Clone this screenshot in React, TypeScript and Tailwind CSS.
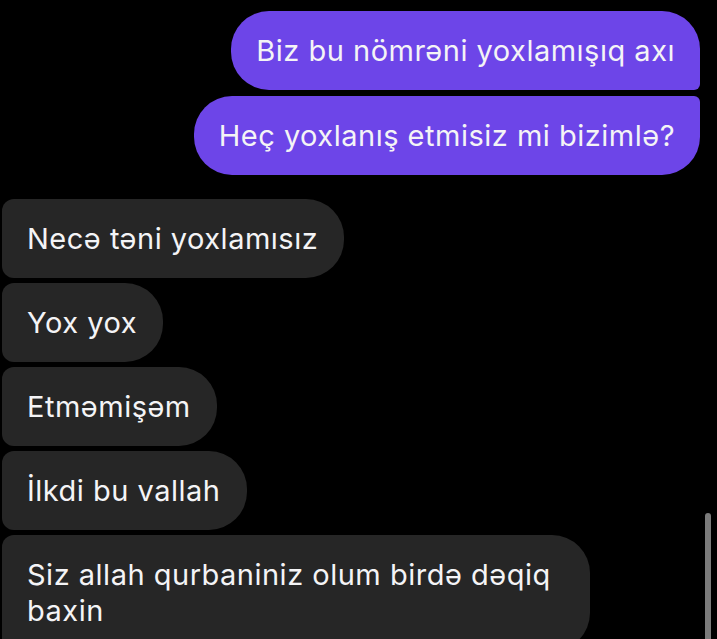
const sent = [
  { text: "Biz bu nömrəni yoxlamışıq axı", shape: "rounded-[38px] rounded-br-[6px]" },
  { text: "Heç yoxlanış etmisiz mi bizimlə?", shape: "rounded-[38px] rounded-tr-[6px]" },
];

const received = [
  "Necə təni yoxlamısız",
  "Yox yox",
  "Etməmişəm",
  "İlkdi bu vallah",
];

export default function App() {
  return (
    <div
      className="relative h-[639px] w-[717px] overflow-hidden bg-black text-[29px] leading-[36px] tracking-[0.5px] text-[#f4f4f6]"
      style={{ fontFamily: "Inter, 'Noto Sans', sans-serif" }}
    >
      <div className="flex flex-col items-end gap-[6px] pt-[11px] pr-[17px]">
        {sent.map((m) => (
          <div key={m.text} className={`flex h-[79px] items-center bg-[#6d45e8] pl-[25px] pr-[25px] ${m.shape}`}>
            {m.text}
          </div>
        ))}
      </div>

      <div className="mt-[24px] flex flex-col items-start gap-[5px] pl-[2px]">
        {received.map((t) => (
          <div
            key={t}
            className="flex h-[79px] items-center rounded-l-[12px] rounded-r-[38px] bg-[#262626] pl-[25px] pr-[26px]"
          >
            {t}
          </div>
        ))}
        <div className="w-[588px] rounded-l-[12px] rounded-r-[38px] bg-[#262626] pb-[22px] pl-[25px] pr-[26px] pt-[22px]">
          Siz allah qurbaniniz olum birdə dəqiq baxin
        </div>
      </div>

      <div className="absolute left-[705px] top-[513px] h-[140px] w-[6px] rounded-full bg-[#7b7b7b]" />
    </div>
  );
}
